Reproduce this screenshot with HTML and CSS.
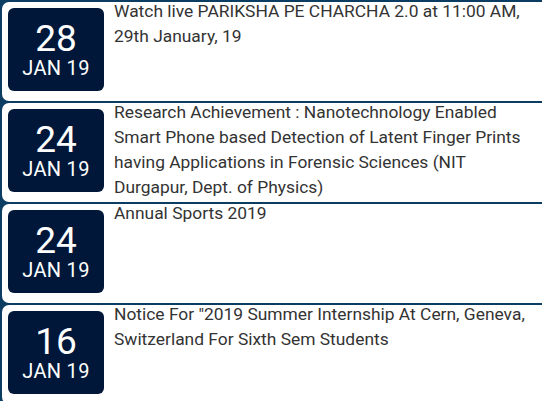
FILE: index.html
```html
<!DOCTYPE html>
<html>
<head>
<meta charset="utf-8">
<link rel="stylesheet" href="styles.css">
</head>
<body>
<div class="list">
  <div class="card">
    <div class="date"><span class="day">28</span><span class="mon">JAN 19</span></div>
    <div class="text">Watch live PARIKSHA PE CHARCHA 2.0 at 11:00 AM, 29th January, 19</div>
  </div>
  <div class="card">
    <div class="date"><span class="day">24</span><span class="mon">JAN 19</span></div>
    <div class="text">Research Achievement : Nanotechnology Enabled Smart Phone based Detection of Latent Finger Prints having Applications in Forensic Sciences (NIT Durgapur, Dept. of Physics)</div>
  </div>
  <div class="card">
    <div class="date"><span class="day">24</span><span class="mon">JAN 19</span></div>
    <div class="text">Annual Sports 2019</div>
  </div>
  <div class="card">
    <div class="date"><span class="day">16</span><span class="mon">JAN 19</span></div>
    <div class="text">Notice For "2019 Summer Internship At Cern, Geneva, Switzerland For Sixth Sem Students</div>
  </div>
</div>
</body>
</html>
```
FILE: styles.css
```css
html, body {
  margin: 0;
  padding: 0;
  background: #0b3c61;
  overflow: hidden;
}
.list {
  padding: 2px 0 0 2px;
  display: flex;
  flex-direction: column;
  gap: 2px;
}
.card {
  background: #fff;
  border-radius: 7px 0 0 7px;
  height: 99px;
  display: flex;
  align-items: flex-start;
  font-family: Roboto, "Liberation Sans", sans-serif;
}
.date {
  flex: 0 0 96px;
  height: 83px;
  box-sizing: border-box;
  padding-top: 13px;
  margin: 6px 10px 0 6px;
  background: #00173a;
  border-radius: 6px;
  color: #fff;
  display: flex;
  flex-direction: column;
  align-items: center;
}
.day {
  font-size: 37px;
  line-height: 36px;
}
.mon {
  font-size: 20px;
  line-height: 22px;
  letter-spacing: 0.3px;
}
.text {
  color: #333;
  font-size: 17.4px;
  line-height: 25px;
  margin-top: -3px;
  padding-right: 8px;
}
```
